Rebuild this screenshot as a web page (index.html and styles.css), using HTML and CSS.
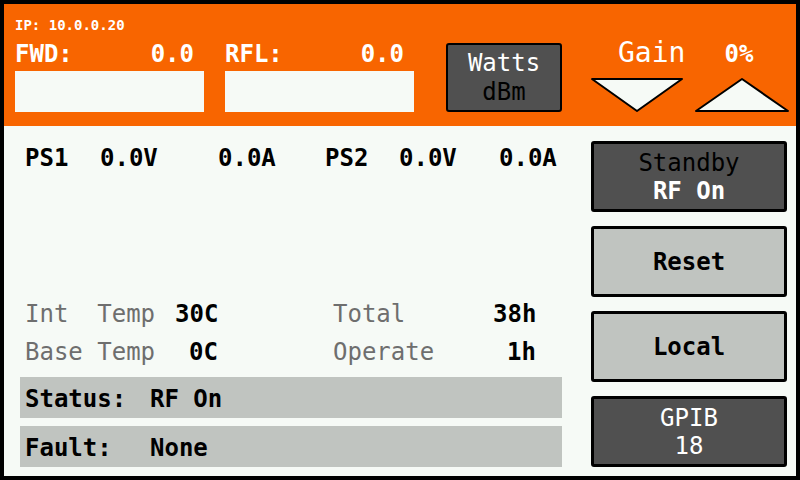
FILE: index.html
```html
<!DOCTYPE html>
<html lang="en">

<head>
    <meta charset="UTF-8">
    <meta name="viewport" content="width=device-width, initial-scale=1.0">
    <title>Amplifier Panel</title>
    <link rel="stylesheet" href="styles.css">
</head>

<body>
    <div id="ekran">
        <div id="zaglavlje">
            <div id="merila">
                <p id="ip">IP: 10.0.0.20</p>
                <div id="merila_red">
                    <div class="merilo">
                        <div class="merilo_naslov"><span>FWD:</span><span>0.0</span></div>
                        <div class="merilo_traka"></div>
                    </div>
                    <div class="merilo">
                        <div class="merilo_naslov"><span>RFL:</span><span>0.0</span></div>
                        <div class="merilo_traka"></div>
                    </div>
                </div>
            </div>

            <div id="jedinice">
                <span class="svetlo">Watts</span>
                <span>dBm</span>
            </div>

            <div id="pojacanje">
                <div id="pojacanje_red">
                    <span id="gain">Gain</span>
                    <span id="procenat">0%</span>
                </div>
                <div id="strelice">
                    <svg class="strelica" width="94" height="36" viewBox="0 0 94 36">
                        <polygon points="2,2 92,2 47,34" fill="#f6faf6" stroke="#000" stroke-width="2" stroke-linejoin="round"/>
                    </svg>
                    <svg class="strelica" width="96" height="36" viewBox="0 0 96 36">
                        <polygon points="48,2 94,34 2,34" fill="#f6faf6" stroke="#000" stroke-width="2" stroke-linejoin="round"/>
                    </svg>
                </div>
            </div>
        </div>

        <div id="telo">
            <div id="levo">
                <div id="napajanje">
                    <span>PS1</span>
                    <span>0.0V</span>
                    <span>0.0A</span>
                    <span>PS2</span>
                    <span>0.0V</span>
                    <span>0.0A</span>
                </div>

                <div id="donje">
                    <div class="temp_red">
                        <span class="naziv">Int  Temp</span>
                        <span class="vrednost">30C</span>
                        <span class="naziv desno">Total</span>
                        <span class="vrednost">38h</span>
                    </div>
                    <div class="temp_red">
                        <span class="naziv">Base Temp</span>
                        <span class="vrednost">0C</span>
                        <span class="naziv desno">Operate</span>
                        <span class="vrednost">1h</span>
                    </div>

                    <div class="stanje prvo"><span class="stanje_naslov">Status:</span><span>RF On</span></div>
                    <div class="stanje"><span class="stanje_naslov">Fault:</span><span>None</span></div>
                </div>
            </div>

            <div id="dugmici">
                <div class="dugme tamno">
                    <span>Standby</span>
                    <span class="svetlo debelo">RF On</span>
                </div>
                <div class="dugme debelo">Reset</div>
                <div class="dugme debelo">Local</div>
                <div class="dugme tamno">
                    <span class="svetlo">GPIB</span>
                    <span class="svetlo">18</span>
                </div>
            </div>
        </div>
    </div>
</body>

</html>
```

FILE: styles.css
```css
body {
    margin: 0;
    background-color: black;
    font-family: "DejaVu Sans Mono", monospace;
}

#ekran {
    width: 792px;
    height: 472px;
    border: solid black 4px;
    background-color: #f6faf6;
    display: flex;
    flex-direction: column;
}

#zaglavlje {
    height: 122px;
    background-color: #f86500;
    display: flex;
    flex-direction: row;
    padding-left: 11px;
    color: white;
}

#merila {
    width: 399px;
    padding-top: 14px;
}

#ip {
    margin: 0;
    font-size: 14px;
    line-height: 14px;
    font-weight: bold;
}

#merila_red {
    display: flex;
    flex-direction: row;
    gap: 21px;
    margin-top: 10px;
}

.merilo {
    width: 189px;
}

.merilo_naslov {
    display: flex;
    justify-content: space-between;
    font-size: 24px;
    line-height: 24px;
    font-weight: bold;
    padding-right: 10px;
}

.merilo_traka {
    height: 41px;
    margin-top: 5px;
    background-color: #f6faf6;
}

#jedinice {
    width: 112px;
    height: 65px;
    margin-top: 39px;
    margin-left: 32px;
    border: solid black 2px;
    border-radius: 3px;
    background-color: #505050;
    color: black;
    font-size: 24px;
    line-height: 29px;
    display: flex;
    flex-direction: column;
    align-items: center;
    justify-content: center;
}

.svetlo {
    color: white;
}

.debelo {
    font-weight: bold;
}

#pojacanje {
    margin-left: 28px;
    padding-top: 35px;
    width: 205px;
}

#pojacanje_red {
    display: flex;
    align-items: baseline;
    height: 28px;
}

#gain {
    width: 93px;
    flex-shrink: 0;
    padding-left: 28px;
    box-sizing: border-box;
    font-size: 28px;
    line-height: 28px;
}

#procenat {
    width: 112px;
    flex-shrink: 0;
    text-align: center;
    font-size: 24px;
    font-weight: bold;
}

#strelice {
    display: flex;
    gap: 10px;
    margin-top: 10px;
}

.strelica {
    display: block;
}

#telo {
    flex: 1;
    display: flex;
    flex-direction: row;
}

#levo {
    flex: 1;
    display: flex;
    flex-direction: column;
    padding: 20px 29px 9px 16px;
}

#napajanje {
    display: grid;
    grid-template-columns: 75px 118px 107px 74px 100px auto;
    padding-left: 5px;
    font-size: 24px;
    line-height: 24px;
    font-weight: bold;
}

#donje {
    margin-top: auto;
}

.temp_red {
    display: flex;
    flex-direction: row;
    padding-left: 5px;
    font-size: 24px;
    line-height: 38px;
    white-space: pre;
}

.naziv {
    width: 150px;
    color: #6e6e6e;
}

.naziv.desno {
    width: 160px;
    margin-left: 115px;
}

.vrednost {
    width: 43px;
    text-align: right;
    font-weight: bold;
}

.stanje {
    height: 37px;
    padding-top: 4px;
    padding-left: 5px;
    margin-top: 8px;
    background-color: #c0c4c0;
    font-size: 24px;
    line-height: 37px;
    font-weight: bold;
}

.stanje.prvo {
    margin-top: 6px;
}

.stanje_naslov {
    display: inline-block;
    width: 125px;
}

#dugmici {
    width: 196px;
    margin-right: 9px;
    padding-top: 15px;
    display: flex;
    flex-direction: column;
    gap: 14px;
}

.dugme {
    height: 65px;
    border: solid black 3px;
    border-radius: 3px;
    background-color: #c0c4c0;
    font-size: 24px;
    line-height: 28px;
    display: flex;
    flex-direction: column;
    align-items: center;
    justify-content: center;
}

.tamno {
    background-color: #505050;
}
```
